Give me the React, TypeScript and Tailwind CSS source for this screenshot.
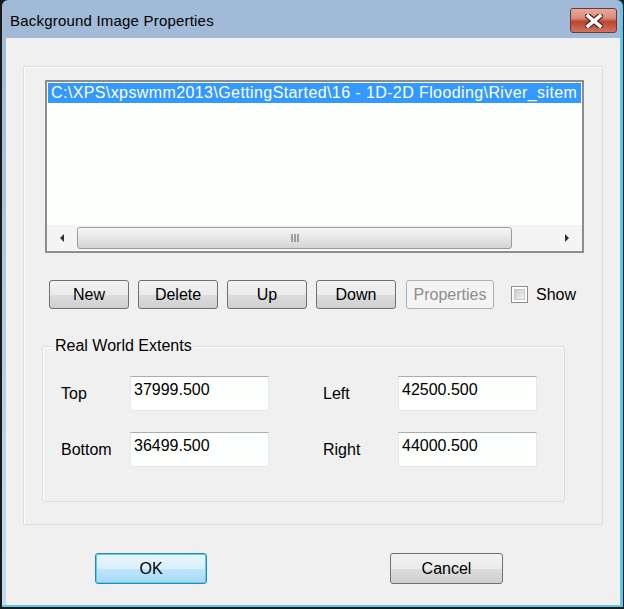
import React from "react";

const F = { fontFamily: '"Liberation Sans", Arial, sans-serif' };

function Btn({ label, w, disabled }: { label: string; w: string; disabled?: boolean }) {
  return (
    <div
      className={`${w} h-[29px] rounded-[3px] border flex items-center justify-center text-[16px] leading-none ${
        disabled
          ? "border-[#adb2b5] text-[#8d8d8d] bg-[#f4f4f4]"
          : "border-[#707070] text-black bg-[linear-gradient(#f2f2f2_0%,#ebebeb_50%,#dddddd_51%,#cfcfcf_100%)]"
      }`}
    >
      <span>{label}</span>
    </div>
  );
}

function Field({ value }: { value: string }) {
  return (
    <div className="w-[139px] h-[35px] bg-[#fdfffd] border border-[#e2e8ee] border-t-[#abadb3] pl-[3px] pt-[3px] text-[16px] leading-[20px] text-black">
      {value}
    </div>
  );
}

export default function App() {
  return (
    <div style={F} className="w-[624px] h-[609px] bg-[#1b1b1b] flex flex-col overflow-hidden">
      <div className="ml-[2px] mr-[1px] mb-[2px] flex-1 flex flex-col bg-[linear-gradient(#9fb9d6,#c6dbef)] rounded-tl-[6px] rounded-tr-[6px] border-r-[3px] border-r-[#5fc7ea] border-b-[2px] border-b-[#5fc7ea]">
        {/* title bar */}
        <div className="h-[38px] flex items-start justify-between pl-[8px] pr-[3px]">
          <div className="mt-[12px] text-[15px] tracking-[0.2px] leading-[18px] text-black">Background Image Properties</div>
          <div className="mt-[8px] w-[47px] h-[25px] rounded-[3px] border border-[#6b3a38] bg-[linear-gradient(#e9a99b_0%,#d88a7a_40%,#c0432c_55%,#d27462_100%)] flex items-center justify-center">
            <svg width="18" height="14" viewBox="0 0 18 14">
              <path d="M3 2 L15 12 M15 2 L3 12" stroke="#4a2a2a" strokeWidth="6" strokeLinecap="square" />
              <path d="M3 2 L15 12 M15 2 L3 12" stroke="#ffffff" strokeWidth="3.5" strokeLinecap="square" />
            </svg>
          </div>
        </div>
        {/* client */}
        <div className="ml-[4px] flex-1 bg-[#f0f0f0] flex flex-col">
          <div className="ml-[17px] mt-[28px] w-[580px] h-[459px] border border-[#d5dfe8] shadow-[inset_1px_1px_0_#ffffff] flex flex-col">
            {/* listbox */}
            <div className="ml-[21px] mt-[13px] w-[539px] h-[173px] border-2 border-[#8b8d8f] bg-[#fcfffc] flex flex-col">
              <div className="mt-[1px] mx-[1px] h-[20px] bg-[#3399ff] text-white text-[16px] tracking-[0.4px] leading-[20px] pl-[3px] whitespace-nowrap overflow-hidden">
                C:\XPS\xpswmm2013\GettingStarted\16 - 1D-2D Flooding\River_sitem
              </div>
              <div className="flex-1" />
              <div className="h-[25px] flex items-center bg-[#f4f4f4] mb-[1px]">
                <div className="w-[30px] h-full flex items-center justify-center">
                  <svg width="5" height="8" viewBox="0 0 5 8"><path d="M4 0 L0 4 L4 8 Z" fill="#303030" /></svg>
                </div>
                <div className="w-[435px] h-[22px] rounded-[3px] border border-[#9b9b9b] bg-[linear-gradient(#f6f6f6,#e6e6e6_50%,#d4d4d4)] flex items-center justify-center">
                  <svg width="8" height="8" viewBox="0 0 8 8">
                    <path d="M1 0 V8 M4 0 V8 M7 0 V8" stroke="#5a5a5a" strokeWidth="1" />
                  </svg>
                </div>
                <div className="flex-1" />
                <div className="w-[30px] h-full flex items-center justify-center">
                  <svg width="5" height="8" viewBox="0 0 5 8"><path d="M0 0 L4 4 L0 8 Z" fill="#303030" /></svg>
                </div>
              </div>
            </div>
            {/* buttons */}
            <div className="ml-[25px] mt-[27px] flex items-center">
              <Btn label="New" w="w-[80px]" />
              <div className="w-[9px]" />
              <Btn label="Delete" w="w-[80px]" />
              <div className="w-[9px]" />
              <Btn label="Up" w="w-[80px]" />
              <div className="w-[9px]" />
              <Btn label="Down" w="w-[80px]" />
              <div className="w-[10px]" />
              <Btn label="Properties" w="w-[88px]" disabled />
              <div className="ml-[17px] w-[17px] h-[17px] border border-[#8f8f8f] bg-white p-[2px]">
                <div className="w-full h-full border border-[#c8c8c8] bg-[linear-gradient(135deg,#cbcbcb,#f4f4f4)]" />
              </div>
              <span className="ml-[8px] text-[16px] leading-none text-black">Show</span>
            </div>
            {/* group box */}
            <div className="ml-[18px] mt-[37px] w-[523px] h-[156px] border border-[#d5dfe8] rounded-[3px] shadow-[inset_1px_1px_0_#ffffff] relative">
              <div className="absolute left-[10px] -top-[10px] px-[2px] bg-[#f0f0f0] text-[16px] leading-[18px] text-black">
                Real World Extents
              </div>
              <div className="pl-[18px] pt-[29px] flex flex-col gap-[21px]">
                <div className="flex items-center">
                  <div className="w-[69px] text-[16px] text-black">Top</div>
                  <Field value="37999.500" />
                  <div className="w-[54px]" />
                  <div className="w-[75px] text-[16px] text-black">Left</div>
                  <Field value="42500.500" />
                </div>
                <div className="flex items-center">
                  <div className="w-[69px] text-[16px] text-black">Bottom</div>
                  <Field value="36499.500" />
                  <div className="w-[54px]" />
                  <div className="w-[75px] text-[16px] text-black">Right</div>
                  <Field value="44000.500" />
                </div>
              </div>
            </div>
          </div>
          {/* ok cancel */}
          <div className="mt-[28px] flex">
            <div className="ml-[89px] w-[112px] h-[31px] rounded-[3px] border border-[#3c7fb1] shadow-[inset_0_0_0_1px_#48d5fb] bg-[linear-gradient(#eaf6fd_0%,#d9f0fc_50%,#bee6fd_51%,#a7d9f5_100%)] flex items-center justify-center text-[16px] text-black">
              OK
            </div>
            <div className="ml-[183px] w-[113px] h-[31px] rounded-[3px] border border-[#707070] bg-[linear-gradient(#f2f2f2_0%,#ebebeb_50%,#dddddd_51%,#cfcfcf_100%)] flex items-center justify-center text-[16px] text-black">
              Cancel
            </div>
          </div>
        </div>
      </div>
    </div>
  );
}
